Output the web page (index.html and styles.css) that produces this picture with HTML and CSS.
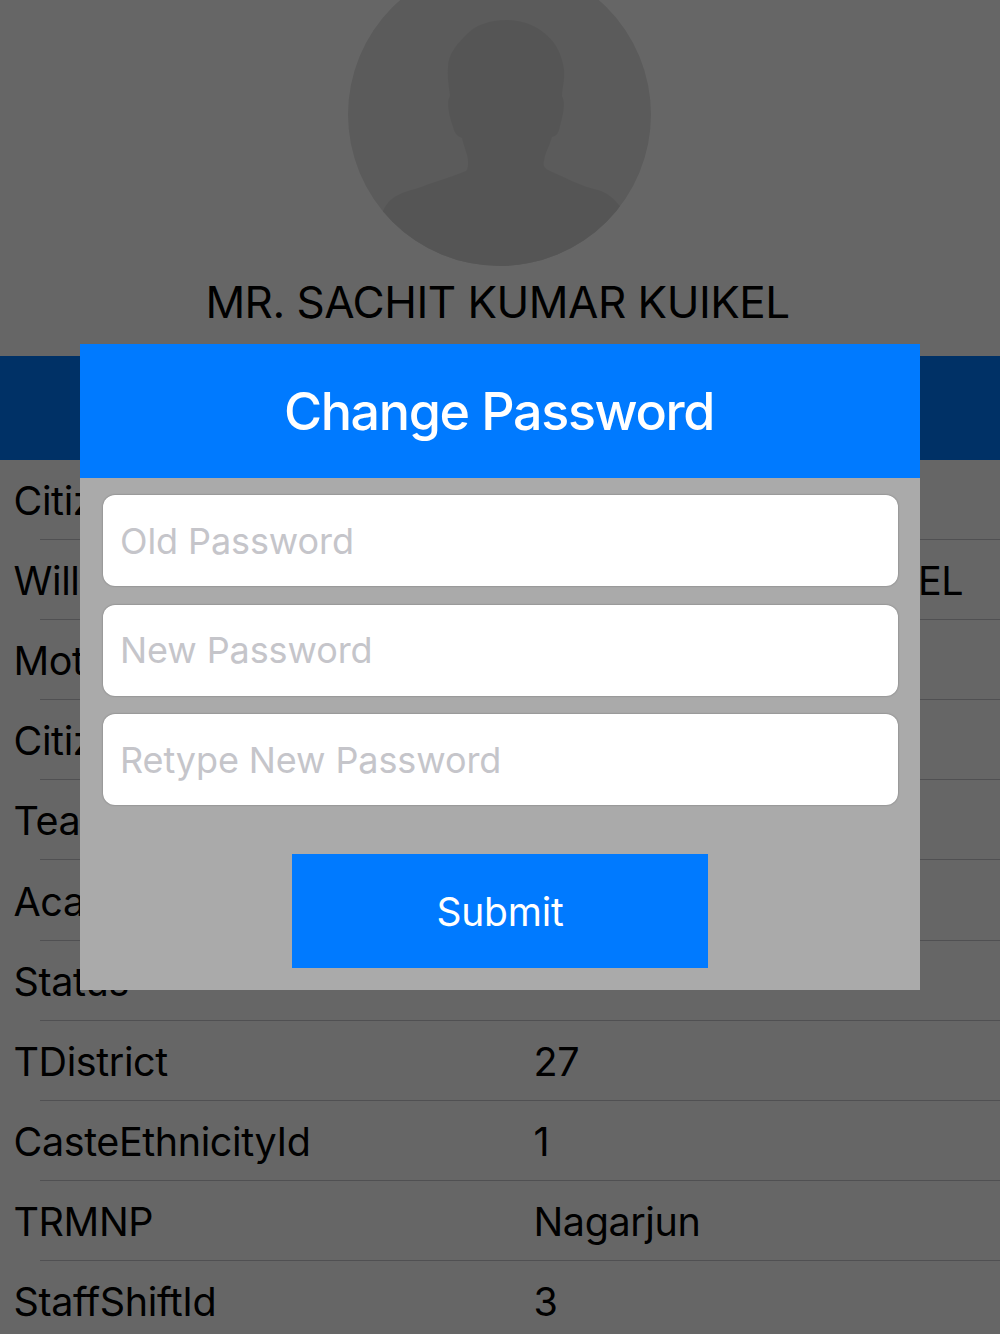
FILE: index.html
```html
<!DOCTYPE html>
<html lang="en">

<head>
    <meta charset="UTF-8">
    <meta name="viewport" content="width=device-width, initial-scale=1.0">
    <title>Change Password</title>
    <link rel="stylesheet" href="styles.css">
</head>

<body>
    <div class="profile">
        <svg class="avatar" viewBox="0 0 303 303">
            <defs>
                <clipPath id="circle">
                    <circle cx="151.5" cy="151.5" r="151.5" />
                </clipPath>
            </defs>
            <g clip-path="url(#circle)">
                <rect width="303" height="303" fill="#e3e3e3" />
                <path fill="#d5d5d5" d="M158 57C141 57 127 62 117 73C108 82 100 92 100 104C99 114 101 124 102 133C98 139 101 153 105 164C107 171 109 173 114 175C115 182 120 191 120 199C120 202 120 206 118 208C105 213 87 219 73 224C59 229 43 230 35 248L20 303H290L272 243C265 235 260 230 250 227C232 223 216 214 200 207C196 205 195 202 196 198C197 190 202 182 204 174C209 173 211 169 212 163C215 152 218 140 214 133C214 126 217 118 216 106C213 88 206 77 195 69C185 61 172 57 158 57Z" />
            </g>
        </svg>
        <h1 class="name">MR. SACHIT KUMAR KUIKEL</h1>
    </div>

    <div class="section-bar"></div>

    <div class="details">
        <div class="row"><span>Citizenship No</span><span></span></div>
        <div class="row"><span>Will Person</span><span>HASTA KUMAR KUIKEL</span></div>
        <div class="row"><span>Mother Name</span><span></span></div>
        <div class="row"><span>Citizenship District</span><span></span></div>
        <div class="row"><span>Teacher Type</span><span></span></div>
        <div class="row"><span>Academic Level</span><span></span></div>
        <div class="row"><span>Status</span><span></span></div>
        <div class="row"><span>TDistrict</span><span>27</span></div>
        <div class="row"><span>CasteEthnicityId</span><span>1</span></div>
        <div class="row"><span>TRMNP</span><span>Nagarjun</span></div>
        <div class="row"><span>StaffShiftId</span><span>3</span></div>
    </div>

    <!-- Change password dialog -->
    <div class="overlay">
        <form class="modal">
            <h2 class="modal-title">Change Password</h2>
            <div class="fields">
                <input type="password" placeholder="Old Password">
                <input type="password" placeholder="New Password">
                <input type="password" placeholder="Retype New Password">
            </div>
            <button type="button" class="submit">Submit</button>
        </form>
    </div>
</body>

</html>
```
FILE: styles.css
```css
* {
    box-sizing: border-box;
}

body {
    margin: 0;
    height: 1334px;
    overflow: hidden;
    background-color: #fff;
    color: #000;
    font-family: Inter, sans-serif;
    font-variant-ligatures: none;
}

/* Profile header, scrolled slightly past the top */
.profile {
    display: flex;
    flex-direction: column;
    align-items: center;
    height: 356px;
}

.avatar {
    width: 303px;
    height: 303px;
    margin: -37.5px 1px 0 0;
    flex-shrink: 0;
}

.name {
    margin: 9.5px 5px 0 0;
    font-size: 44px;
    font-weight: 400;
    line-height: 54px;
    letter-spacing: -0.5px;
    white-space: nowrap;
}

.section-bar {
    height: 104px;
    background-color: #007aff;
}

/* Detail rows */
.row {
    display: grid;
    grid-template-columns: 520px 1fr;
    align-items: center;
    height: 80.1px;
    padding: 2px 0 0 13.5px;
    font-size: 39.5px;
    letter-spacing: -0.4px;
    white-space: nowrap;
    background: linear-gradient(#c8c7cc, #c8c7cc) 40px 100% / 100% 1px no-repeat;
}

/* Dimmed layer over the page */
.overlay {
    position: absolute;
    inset: 0;
    display: flex;
    align-items: center;
    justify-content: center;
    background-color: rgba(0, 0, 0, 0.6);
}

.modal {
    width: 840px;
    height: 646px;
    background-color: #aaa;
}

.modal-title {
    margin: 0;
    height: 133.5px;
    padding-right: 2px;
    line-height: 135px;
    text-align: center;
    font-size: 52px;
    font-weight: 500;
    letter-spacing: -1.35px;
    color: #fff;
    background-color: #007aff;
}

.fields {
    display: grid;
    gap: 18.5px;
    padding: 17.5px 22.5px 0;
}

.fields input {
    width: 100%;
    height: 91px;
    padding: 0 17.5px;
    border: none;
    border-radius: 12px;
    background-color: #fff;
    box-shadow: 0 0 2px rgba(0, 0, 0, 0.35);
    font-family: inherit;
    font-size: 36px;
    letter-spacing: -0.1px;
}

.fields input::placeholder {
    color: #c5c5ca;
}

.submit {
    display: block;
    width: 416px;
    height: 114px;
    margin: 49px auto 0;
    padding: 1px 0 0;
    border: none;
    background-color: #007aff;
    color: #fff;
    font-family: inherit;
    font-size: 39px;
    letter-spacing: -0.2px;
}
```
